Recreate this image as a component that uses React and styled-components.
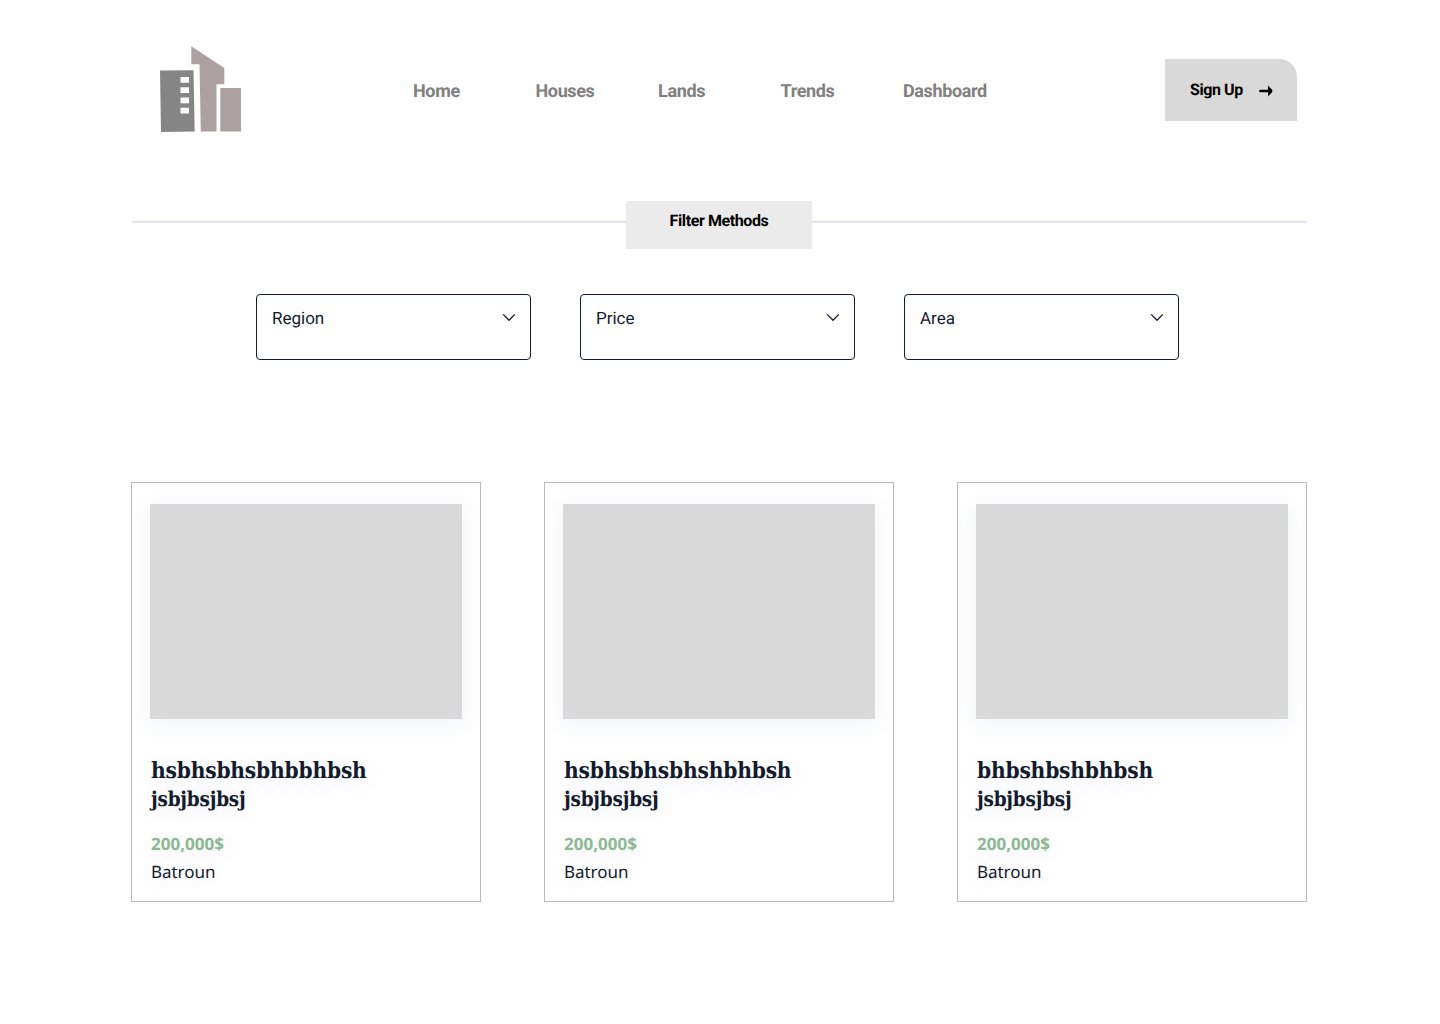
import React from "react";
import styled, { createGlobalStyle } from "styled-components";

const GlobalStyle = createGlobalStyle`
  *, *::before, *::after { box-sizing: border-box; }
  body {
    margin: 0;
    background: #fefefe;
    font-family: Roboto, "Liberation Sans", sans-serif;
    text-rendering: geometricPrecision;
  }
  button { font: inherit; color: inherit; cursor: pointer; text-rendering: inherit; }
`;

const Page = styled.div`
  width: 1440px;
  height: 1024px;
  overflow: hidden;
  display: flex;
  flex-direction: column;
  background: #fefefe;
`;

const Header = styled.header`
  display: flex;
  height: 201px;
  padding: 44px 143px 0 158px;
`;

const LogoMark = styled.svg`
  display: block;
  width: 86px;
  height: 90px;
  flex: none;
`;

const Nav = styled.nav`
  display: grid;
  grid-template-columns: repeat(5, 122.5px);
  margin: 37px 0 0 169px;
`;

const NavLink = styled.a`
  font-size: 18px;
  line-height: 21px;
  font-weight: 700;
  letter-spacing: -0.36px;
  color: #808080;
  white-space: nowrap;
`;

const SignUp = styled.button`
  display: flex;
  align-items: flex-start;
  gap: 16px;
  width: 132px;
  height: 62px;
  margin: 15px 0 0 auto;
  padding: 21px 0 0 25px;
  border: 0;
  border-radius: 0 18px 0 0;
  background: #d9d9d9;
  color: #000;
  font-size: 16px;
  line-height: 20px;
  font-weight: 700;
  letter-spacing: -0.42px;
  white-space: nowrap;
`;

const Arrow = styled.svg`
  width: 15px;
  height: 14px;
  margin-top: 4px;
  flex: none;
`;

const FilterHeading = styled.div`
  display: flex;
  height: 48px;
  margin: 0 133px 0 132px;
`;

const Rule = styled.span`
  flex: ${(p) => p.$width ? `0 0 ${p.$width}px` : "1"};
  height: 2px;
  margin-top: 20px;
  background: linear-gradient(#dedeef 50%, #e9e9f5 50%);
`;

const FilterTitle = styled.h2`
  width: 186px;
  margin: 0;
  padding-top: 10px;
  background: #ebebeb;
  color: #000;
  font-size: 16px;
  line-height: 19px;
  font-weight: 700;
  letter-spacing: -0.4px;
  text-align: center;
`;

const Filters = styled.div`
  display: flex;
  gap: 49px;
  padding: 45px 0 0 256px;
`;

const Select = styled.button`
  display: flex;
  align-items: flex-start;
  justify-content: space-between;
  width: 275px;
  height: 66px;
  padding: 12px 14px 0 15px;
  border: 1px solid #141b2d;
  border-radius: 4px;
  background: #fefefe;
  color: #141b2d;
  font-size: 17px;
  line-height: 24px;
`;

const Chevron = styled.svg`
  width: 14px;
  height: 9px;
  margin-top: 6px;
`;

const Cards = styled.main`
  display: flex;
  gap: 63px;
  padding: 122px 0 0 131px;
`;

const Card = styled.article`
  width: 350px;
  height: 420px;
  padding: 21px 18px 0;
  border: 1px solid #b9b9b9;
`;

const Photo = styled.div`
  height: 215px;
  background: #d9d9d9;
  box-shadow: 0 4px 20px rgba(100, 125, 220, 0.08);
`;

const Details = styled.div`
  padding: 38px 0 0 1px;
  color: #141b2d;
  text-shadow: 0 4px 20px rgba(100, 125, 220, 0.1);
`;

const Title = styled.h3`
  margin: 0;
  font-family: "DejaVu Serif Condensed", "DejaVu Serif", serif;
  font-stretch: condensed;
  font-weight: 700;
`;

const TitleLine = styled.span`
  display: block;
  height: 28px;
  font-size: ${(p) => (p.$small ? 20.5 : 22.5)}px;
  line-height: ${(p) => (p.$small ? 28 : 29)}px;
  letter-spacing: -0.2px;
`;

const Price = styled.p`
  margin: 17px 0 0;
  font-family: "Noto Sans", sans-serif;
  font-size: 17px;
  line-height: 28px;
  font-weight: 700;
  color: #8db992;
`;

const Place = styled.p`
  margin: 0;
  font-family: "Noto Sans", sans-serif;
  font-size: 17px;
  line-height: 28px;
  letter-spacing: -0.05px;
`;

const links = ["Home", "Houses", "Lands", "Trends", "Dashboard"];
const filters = ["Region", "Price", "Area"];
const listings = ["hsbhsbhsbhbbhbsh", "hsbhsbhsbhshbhbsh", "bhbshbshbhbsh"];

const Logo = () => (
  <LogoMark viewBox="158 44 86 90" role="img" aria-label="Buildings">
    <path fill="#858585" fillRule="evenodd" d="M160 70.6 193.5 70.2 194.7 131.5 161 132Z M180.5 77V82.8H189V77Z M180.5 87.3V93H189V87.3Z M180.5 97.5V103.2H189V97.5Z M180.5 107.7V113.5H189V107.7Z" />
    <path fill="#aca0a0" d="M191.3 46.3 224.3 68V84.3H216.5V131.5H200.8L199.5 64.3H191.3Z" />
    <path fill="#aca0a0" d="M220.3 88H241V131.5H220.3Z" />
  </LogoMark>
);

export default function App() {
  return (
    <>
      <GlobalStyle />
      <Page>
        <Header>
          <Logo />
          <Nav>{links.map((label) => <NavLink key={label}>{label}</NavLink>)}</Nav>
          <SignUp>
            Sign Up
            <Arrow viewBox="0 0 15 14">
              <path d="M1.2 7H12" stroke="#000" strokeWidth="2.4" strokeLinecap="round" />
              <path d="M9 1.4 13.2 6V8L9 12.6Z" fill="#000" />
            </Arrow>
          </SignUp>
        </Header>
        <FilterHeading>
          <Rule $width={494} />
          <FilterTitle>Filter Methods</FilterTitle>
          <Rule />
        </FilterHeading>
        <Filters>
          {filters.map((label) => (
            <Select key={label}>
              {label}
              <Chevron viewBox="0 0 14 9">
                <path d="M1.2 1.4 7 7.3 12.8 1.4" fill="none" stroke="#141b2d" strokeWidth="1.3" />
              </Chevron>
            </Select>
          ))}
        </Filters>
        <Cards>
          {listings.map((name) => (
            <Card key={name}>
              <Photo />
              <Details>
                <Title>
                  <TitleLine>{name}</TitleLine>
                  <TitleLine $small>jsbjbsjbsj</TitleLine>
                </Title>
                <Price>200,000$</Price>
                <Place>Batroun</Place>
              </Details>
            </Card>
          ))}
        </Cards>
      </Page>
    </>
  );
}
